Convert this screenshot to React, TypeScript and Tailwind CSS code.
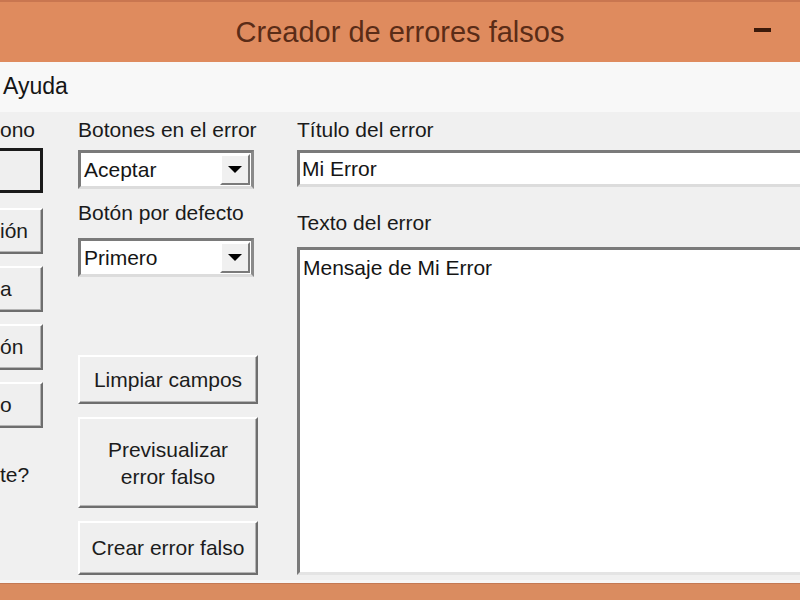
const font = { fontFamily: '"Liberation Sans", Arial, sans-serif' };

function Raised({ className = "", children }: { className?: string; children?: React.ReactNode }) {
  return (
    <div
      className={`flex items-center justify-center bg-[#efefef] border-2 border-t-white border-l-white border-r-[#6e6e6e] border-b-[#6e6e6e] shadow-[inset_-1px_-1px_0_#b4b4b4] text-[#1c1c1c] ${className}`}
    >
      {children}
    </div>
  );
}

function Combo({ value }: { value: string }) {
  return (
    <div className="flex h-[39px] w-[176px] items-stretch bg-white border-[3px] border-t-[#7a7a7a] border-l-[#7a7a7a] border-r-[#8a8a8a] border-b-[#dcdcdc]">
      <div className="flex flex-1 items-center pl-[3px] text-[#151515]">{value}</div>
      <div className="my-[1px] mr-[1px] flex w-[30px] items-center justify-center bg-[#f0f0f0] border-2 border-t-white border-l-white border-r-[#7a7a7a] border-b-[#7a7a7a]">
        <div className="h-0 w-0 border-x-[7px] border-t-[7px] border-x-transparent border-t-black" />
      </div>
    </div>
  );
}

function Label({ children }: { children: React.ReactNode }) {
  return <div className="h-[20px] leading-[20px] whitespace-nowrap text-[#1a1a1a]">{children}</div>;
}

export default function App() {
  return (
    <div className="flex h-[600px] w-[800px] flex-col overflow-hidden bg-[#f0f0f0] text-[21px]" style={font}>
      {/* Title bar */}
      <div className="grid h-[62px] grid-cols-[1fr_auto_1fr] items-center border-t-2 border-[#c97650] bg-[#df8b5e]">
        <div />
        <div className="pt-[2px] text-[29px] text-[#5a2c17]">Creador de errores falsos</div>
        <div className="flex justify-end pr-[29px]">
          <div className="mb-[4px] h-[4px] w-[17px] bg-[#3b1a0b]" />
        </div>
      </div>

      {/* Menu bar */}
      <div className="flex h-[50px] items-center bg-[#f8f8f8] pl-[3px] pb-[2px] text-[23px] text-[#151515]">Ayuda</div>

      {/* Form */}
      <div className="flex flex-1 bg-[#f0f0f0]">
        {/* Icon column (cut off by the screenshot) */}
        <div className="flex w-[43px] shrink-0 flex-col">
          <div className="mt-[8px]">
            <Label>ono</Label>
          </div>
          <div className="mt-[8px] h-[45px] border-[3px] border-l-0 border-[#1a1a1a] bg-[#efefef]" />
          <Raised className="mt-[15px] h-[46px] !justify-start border-l-0 whitespace-nowrap">ión</Raised>
          <Raised className="mt-[12px] h-[46px] !justify-start border-l-0">a</Raised>
          <Raised className="mt-[12px] h-[46px] !justify-start border-l-0 whitespace-nowrap">ón</Raised>
          <Raised className="mt-[12px] h-[46px] !justify-start border-l-0">o</Raised>
          <div className="mt-[37px]">
            <Label>te?</Label>
          </div>
        </div>

        {/* Middle column */}
        <div className="ml-[35px] flex w-[180px] shrink-0 flex-col">
          <div className="mt-[8px]">
            <Label>Botones en el error</Label>
          </div>
          <div className="mt-[10px]">
            <Combo value="Aceptar" />
          </div>
          <div className="mt-[14px]">
            <Label>Botón por defecto</Label>
          </div>
          <div className="mt-[15px]">
            <Combo value="Primero" />
          </div>
          <Raised className="mt-[78px] h-[49px]">Limpiar campos</Raised>
          <Raised className="mt-[13px] h-[91px] text-center leading-[27px]">
            Previsualizar
            <br />
            error falso
          </Raised>
          <Raised className="mt-[13px] h-[54px]">Crear error falso</Raised>
        </div>

        {/* Right column */}
        <div className="ml-[39px] flex w-[540px] shrink-0 flex-col">
          <div className="mt-[8px]">
            <Label>Título del error</Label>
          </div>
          <div className="mt-[10px] flex h-[37px] items-center bg-white border-[3px] border-t-[#7a7a7a] border-l-[#7a7a7a] border-r-0 border-b-[#dcdcdc] pl-[2px] text-[#151515]">
            Mi Error
          </div>
          <div className="mt-[26px]">
            <Label>Texto del error</Label>
          </div>
          <div className="mt-[14px] h-[328px] bg-white border-[3px] border-t-[#7a7a7a] border-l-[#7a7a7a] border-r-0 border-b-[#e4e4e4] pl-[3px] pt-[7px] leading-[22px] text-[#151515]">
            Mensaje de Mi Error
          </div>
        </div>
      </div>

      {/* Bottom frame */}
      <div className="h-[3px] bg-[#f7f7f7]" />
      <div className="h-[17px] border-t border-[#c47a55] bg-[#da8c60]" />
    </div>
  );
}
